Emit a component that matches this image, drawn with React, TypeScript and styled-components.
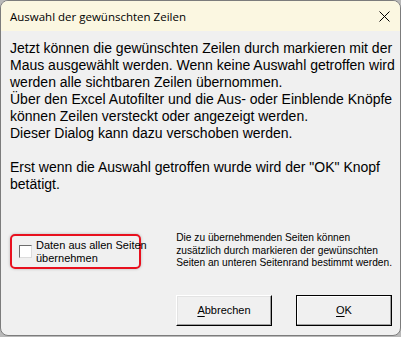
import React from 'react';
import styled, { createGlobalStyle } from 'styled-components';

const GlobalStyle = createGlobalStyle`
    html, body {
        margin: 0;
        padding: 0;
        background: #b9b9b9;
    }
`;

const Window = styled.div`
    width: 399px;
    height: 334px;
    border: 1px solid #7c7c7c;
    border-radius: 8px;
    overflow: hidden;
    display: flex;
    flex-direction: column;
    background: #f0f0f0;
    font-family: "Liberation Sans", Arial, sans-serif;
    color: #000;
`;

const TitleBar = styled.div`
    height: 30px;
    flex-shrink: 0;
    background: #fbf7e1;
    display: flex;
    align-items: center;
    justify-content: space-between;
    padding: 0 9px 0 9px;
    font-family: "Open Sans", "Noto Sans", sans-serif;
    font-size: 11.5px;
`;

const CloseIcon = styled.svg`
    width: 11px;
    height: 11px;
    margin-right: 1px;
`;

const Content = styled.div`
    flex: 1;
    display: flex;
    flex-direction: column;
    padding: 9px 8px 0 9px;
`;

const Message = styled.div`
    font-size: 14px;
    line-height: 17px;
    white-space: nowrap;
`;

const OptionsRow = styled.div`
    display: flex;
    align-items: flex-start;
    justify-content: space-between;
    margin-top: 38px;
`;

const CheckGroup = styled.label`
    width: 120px;
    height: 31px;
    border: 2px solid #e8101e;
    border-radius: 5px;
    box-shadow: 0 0 3px rgba(0, 0, 0, 0.25);
    display: flex;
    align-items: center;
    gap: 4px;
    padding-left: 7px;
    margin-top: 3px;
`;

const Box = styled.span`
    width: 11px;
    height: 11px;
    background: #fff;
    border: 1px solid #6d6d6d;
    border-right-color: #dcdcdc;
    border-bottom-color: #dcdcdc;
    flex-shrink: 0;
`;

const SmallText = styled.div`
    font-size: 11px;
    line-height: 12.5px;
    white-space: nowrap;
`;

const Hint = styled(SmallText)`
    font-size: 10.2px;
    margin-top: 1px;
`;

const ButtonRow = styled.div`
    display: flex;
    justify-content: flex-end;
    gap: 24px;
    margin-top: 25px;
`;

const Button = styled.button<{ $default?: boolean }>`
    width: 96px;
    height: 31px;
    background: #f0f0f0;
    font-family: "Liberation Sans", Arial, sans-serif;
    font-size: 11px;
    color: #000;
    padding: 0;
    border: 1px solid ${p => (p.$default ? '#000' : '#fff')};
    border-right-color: #000;
    border-bottom-color: #000;
    box-shadow: inset -1px -1px 0 #a0a0a0, inset 1px 1px 0 ${p => (p.$default ? '#fff' : '#e3e3e3')};
    cursor: default;

    u {
        text-decoration-thickness: 1px;
        text-underline-offset: 2px;
    }
`;

export default function App() {
    return (
        <>
            <GlobalStyle />
            <Window>
                <TitleBar>
                    <span>Auswahl der gewünschten Zeilen</span>
                    <CloseIcon viewBox="0 0 11 11">
                        <path d="M0.5 0.5 L10.5 10.5 M10.5 0.5 L0.5 10.5" stroke="#000" strokeWidth="1" />
                    </CloseIcon>
                </TitleBar>
                <Content>
                    <Message>
                        Jetzt können die gewünschten Zeilen durch markieren mit der<br />
                        Maus ausgewählt werden. Wenn keine Auswahl getroffen wird<br />
                        werden alle sichtbaren Zeilen übernommen.<br />
                        Über den Excel Autofilter und die Aus- oder Einblende Knöpfe<br />
                        können Zeilen versteckt oder angezeigt werden.<br />
                        Dieser Dialog kann dazu verschoben werden.<br />
                        <br />
                        Erst wenn die Auswahl getroffen wurde wird der "OK" Knopf<br />
                        betätigt.
                    </Message>
                    <OptionsRow>
                        <CheckGroup>
                            <Box />
                            <SmallText>
                                Daten aus allen Seiten<br />
                                übernehmen
                            </SmallText>
                        </CheckGroup>
                        <Hint>
                            Die zu übernehmenden Seiten können<br />
                            zusätzlich durch markieren der gewünschten<br />
                            Seiten an unteren Seitenrand bestimmt werden.
                        </Hint>
                    </OptionsRow>
                    <ButtonRow>
                        <Button>
                            <u>A</u>bbrechen
                        </Button>
                        <Button $default>
                            <u>O</u>K
                        </Button>
                    </ButtonRow>
                </Content>
            </Window>
        </>
    );
}
